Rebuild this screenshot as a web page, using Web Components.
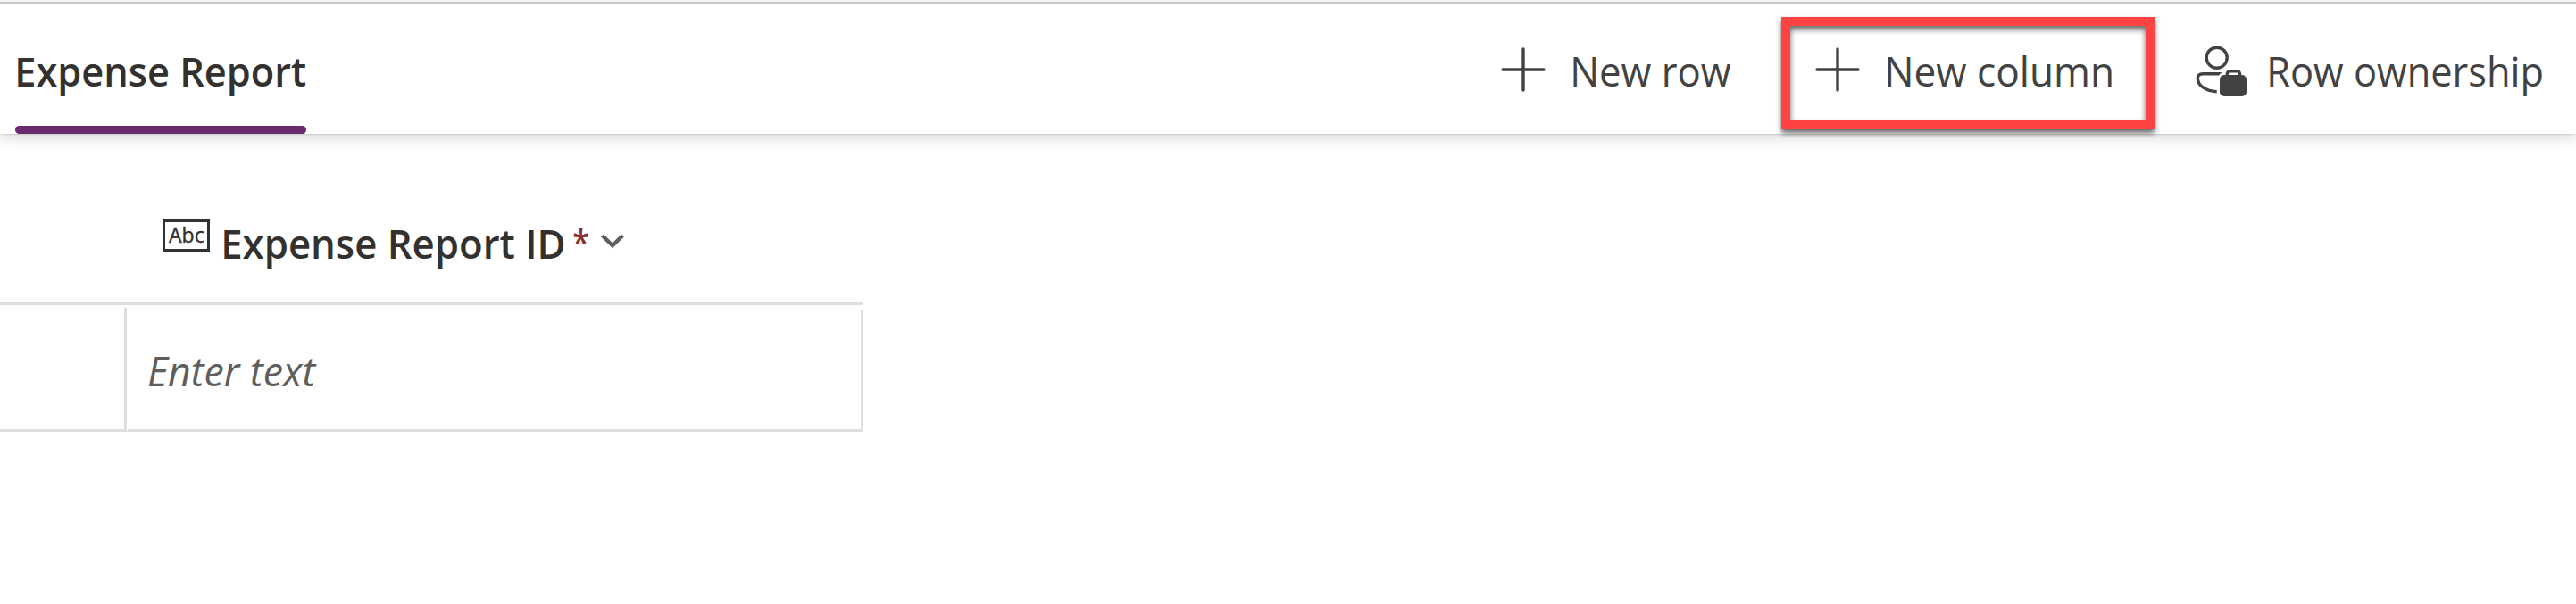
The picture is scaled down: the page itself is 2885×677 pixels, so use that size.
<!DOCTYPE html>
<html lang="en">
<head>
<meta charset="utf-8">
<title>Expense Report</title>
<style>
html,body{margin:0;background:#fff;overflow:hidden}
body{font:400 46px/64px "Open Sans","Noto Sans",sans-serif;color:#424242}
</style>
</head>
<body>
<expense-page></expense-page>
<script>
const ctx = document.createElement('canvas').getContext('2d');

// A single line label whose glyphs fill exactly the given width.
class FitLabel extends HTMLElement {
  constructor() {
    super();
    this.attachShadow({mode:'open'}).innerHTML = `<style>
      :host{display:block;flex:none;white-space:pre}
      span{display:inline-block;transform-origin:0 0;vertical-align:top}
    </style><span><slot></slot></span>`;
  }
  connectedCallback() {
    const s = getComputedStyle(this), w = +this.getAttribute('w');
    ctx.font = `${s.fontStyle} ${s.fontWeight} ${s.fontSize} ${s.fontFamily}`;
    const m = ctx.measureText(this.textContent);
    const k = w / (m.actualBoundingBoxLeft + m.actualBoundingBoxRight);
    this.style.width = w + 'px';
    this.shadowRoot.querySelector('span').style.transform =
      `translateX(${m.actualBoundingBoxLeft * k}px) scaleX(${k})`;
  }
}
customElements.define('fit-label', FitLabel);

const ICONS = {
  add: `<svg width="50" height="50" viewBox="0 0 50 50"><path d="M25 2v46M2 25h46" fill="none" stroke="#424242" stroke-width="3.4" stroke-linecap="round"/></svg>`,
  owner: `<svg width="58" height="58" viewBox="0 0 58 58"><g fill="none" stroke="#424242" stroke-width="3.4"><circle cx="23.7" cy="12.7" r="11.5"/><path d="M23.7 50.7C11 50.3 2.3 43.5 2.3 35.7C2.3 32 4.6 30.7 8.2 30.7H25.2"/><path d="M35.3 34v-3.2a3 3 0 0 1 3-3h8.2a3 3 0 0 1 3 3V34"/></g><path d="M24.6 29h5.6q-2.4 1-4.2 3.4h-1.4z" fill="#424242"/><rect x="27" y="32" width="30" height="24" rx="5" fill="#424242"/></svg>`,
  chevron: `<svg width="26" height="18" viewBox="0 0 26 18"><path d="M1.6 2L13 13.2L24.4 2" fill="none" stroke="#605e5c" stroke-width="4.4"/></svg>`
};
class UiIcon extends HTMLElement {
  connectedCallback() {
    if (this.shadowRoot) return;
    this.attachShadow({mode:'open'}).innerHTML =
      `<style>:host{display:block;flex:none}svg{display:block}</style>${ICONS[this.getAttribute('name')]}`;
  }
}
customElements.define('ui-icon', UiIcon);

class CommandButton extends HTMLElement {
  constructor() {
    super();
    this.attachShadow({mode:'open'}).innerHTML = `<style>
      :host{display:flex;flex:none;align-items:flex-start;gap:var(--gap,31px)}
      ::slotted(ui-icon){margin-top:6px}
      ::slotted([name=owner]){margin-top:5px}
    </style><slot name="icon"></slot><slot></slot>`;
  }
}
customElements.define('command-button', CommandButton);

class CommandBar extends HTMLElement {
  constructor() {
    super();
    this.attachShadow({mode:'open'}).innerHTML = `<style>
      :host{display:flex;box-sizing:border-box;height:150px;border-top:2px solid #f3f3f3;background:#fff;
        box-shadow:0 0 2px rgba(0,0,0,.25),0 4px 14px rgba(0,0,0,.16);position:relative;clip-path:inset(0 0 -30px 0)}
      .bar{display:flex;flex:1;border-top:3px solid #cbc9c8;padding-left:17px}
      .tab{display:flex;flex-direction:column;justify-content:space-between;width:326px;color:#323130;font-weight:600}
      .tab fit-label{margin:42px 0 0 3px}
      .line{height:9px;border-radius:4.5px;background:#692a6f}
      .commands{display:flex;margin:42px 0 0 1338px;align-items:flex-start}
      .new-column{position:relative;margin-left:94px}
      .mark{position:absolute;left:-38px;top:-28px;width:398px;height:106px;border:10px solid #ff4343;
        box-shadow:0 4px 6px rgba(0,0,0,.6),inset 0 4px 6px rgba(0,0,0,.6)}
      .owner{margin-left:94px;--gap:25px}
    </style>
    <div class="bar">
      <div class="tab"><fit-label w="322">Expense Report</fit-label><div class="line"></div></div>
      <div class="commands">
        <command-button><ui-icon slot="icon" name="add"></ui-icon><fit-label w="177">New row</fit-label></command-button>
        <command-button class="new-column"><ui-icon slot="icon" name="add"></ui-icon><fit-label w="251">New column</fit-label><div class="mark"></div></command-button>
        <command-button class="owner"><ui-icon slot="icon" name="owner"></ui-icon><fit-label w="305">Row ownership</fit-label></command-button>
      </div>
    </div>`;
  }
}
customElements.define('command-bar', CommandBar);

class ColumnHeader extends HTMLElement {
  constructor() {
    super();
    this.attachShadow({mode:'open'}).innerHTML = `<style>
      :host{display:flex;align-items:flex-start;height:189px;padding-left:182px;color:#323130;box-sizing:border-box}
      .type{box-sizing:border-box;width:52.5px;height:36px;margin-top:96px;border:3px solid #323130;padding-left:4px;font-size:23.5px;line-height:28px;-webkit-text-stroke:.4px #323130}
      .name{margin:90px 0 0 16.5px;font-weight:600}
      .required{margin:89px 0 0 10.5px;color:#8e2b2b;font-size:40px;font-weight:600}
      ui-icon{margin:112px 0 0 14.5px}
    </style>
    <div class="type"><fit-label w="39.5">Abc</fit-label></div>
    <fit-label class="name" w="380">Expense Report ID</fit-label>
    <fit-label class="required" w="17">*</fit-label>
    <ui-icon name="chevron"></ui-icon>`;
  }
}
customElements.define('column-header', ColumnHeader);

class DataRow extends HTMLElement {
  constructor() {
    super();
    this.attachShadow({mode:'open'}).innerHTML = `<style>
      :host{display:flex;box-sizing:border-box;width:967px;height:145px;border-top:3px solid #dedede;padding-top:3px}
      .lead{box-sizing:border-box;width:142px;border:solid #dedede;border-width:0 3px 3px 0}
      .cell{box-sizing:border-box;flex:1;border:solid #dedede;border-width:3px 3px 3px 1px;border-top-color:#fff;border-left-color:#fff;padding:35px 0 0 23px;font-style:italic;color:#605e5c}
    </style><div class="lead"></div><div class="cell"><fit-label w="189">Enter text</fit-label></div>`;
  }
}
customElements.define('data-row', DataRow);

class ExpensePage extends HTMLElement {
  constructor() {
    super();
    this.attachShadow({mode:'open'}).innerHTML = `<style>
      :host{display:flex;flex-direction:column;width:2885px;height:677px;overflow:hidden}
      command-bar,column-header,data-row{flex:none}
    </style><command-bar></command-bar><column-header></column-header><data-row></data-row>`;
  }
}
customElements.define('expense-page', ExpensePage);
</script>
</body>
</html>
